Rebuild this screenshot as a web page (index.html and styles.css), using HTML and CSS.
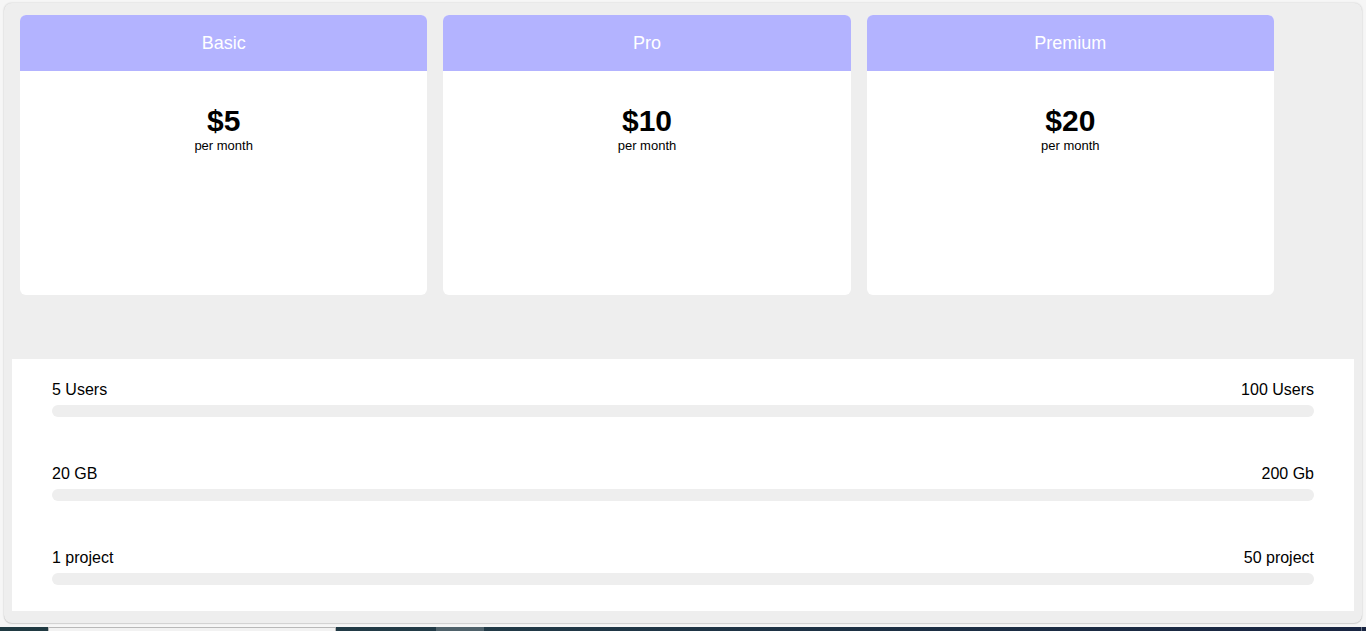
FILE: index.html
```html
<!DOCTYPE html>
<html lang="en">
<head>
<meta charset="utf-8">
<meta name="viewport" content="width=device-width, initial-scale=1">
<title>Pricing</title>
<link rel="stylesheet" href="styles.css">
</head>
<body>
<main class="frame">
  <section class="plans">
    <article class="plan">
      <h2 class="plan-name">Basic</h2>
      <div class="plan-body"><p class="price">$5</p><p class="period">per month</p></div>
    </article>
    <article class="plan">
      <h2 class="plan-name">Pro</h2>
      <div class="plan-body"><p class="price">$10</p><p class="period">per month</p></div>
    </article>
    <article class="plan">
      <h2 class="plan-name">Premium</h2>
      <div class="plan-body"><p class="price">$20</p><p class="period">per month</p></div>
    </article>
  </section>
  <section class="limits">
    <div class="limit">
      <div class="range"><span>5 Users</span><span>100 Users</span></div>
      <div class="track"></div>
    </div>
    <div class="limit">
      <div class="range"><span>20 GB</span><span>200 Gb</span></div>
      <div class="track"></div>
    </div>
    <div class="limit">
      <div class="range"><span>1 project</span><span>50 project</span></div>
      <div class="track"></div>
    </div>
  </section>
</main>
<div class="taskbar">
  <div class="search"></div>
  <div class="active-app"></div>
  <div class="show-desktop"></div>
</div>
</body>
</html>
```
FILE: styles.css
```css
* {
  box-sizing: border-box;
}

body {
  margin: 0;
  padding-top: 3px;
  background: #f6f6f6;
  color: #000;
  font-family: "Liberation Sans", Arial, sans-serif;
  font-size: 16px;
}

h2,
p {
  margin: 0;
}

.frame {
  margin: 0 4px 4px;
  padding: 12px 8px;
  border-radius: 8px;
  background: #eee;
  box-shadow: 0 0 2px rgba(0, 0, 0, 0.2), 0 1px 1px rgba(0, 0, 0, 0.1);
}

.plans {
  display: grid;
  grid-template-columns: repeat(3, 1fr);
  gap: 16px;
  padding: 0 80px 64px 8px;
}

.plan {
  overflow: hidden;
  border-radius: 6px;
  background: #fff;
  text-align: center;
}

.plan-name {
  background: #b3b3ff;
  color: #fff;
  font-size: 18px;
  font-weight: 400;
  line-height: 56px;
}

.plan-body {
  min-height: 224px;
  padding-top: 33px;
}

.price {
  font-size: 30px;
  font-weight: 700;
  line-height: 34px;
}

.period {
  font-size: 13px;
  line-height: 16px;
}

.limits {
  padding: 0 40px;
  background: #fff;
}

.limit {
  padding: 21px 0 26px;
}

.range {
  display: flex;
  justify-content: space-between;
  margin-bottom: 5px;
  line-height: 20px;
}

.track {
  height: 12px;
  border-radius: 6px;
  background: #eee;
}

.taskbar {
  display: flex;
  height: 4px;
  padding-left: 48px;
  background: linear-gradient(90deg, #203a42, #223b47 32%, #1d3144 60%, #192542);
}

.search {
  width: 288px;
  border: 1px solid #b8b8b8;
  border-bottom: 0;
  background: #f2f2f2;
}

.active-app {
  width: 48px;
  margin-left: 100px;
  background: #4f626b;
}

.show-desktop {
  width: 1px;
  margin-left: auto;
  margin-right: 4px;
  background: #6c7587;
}
```
